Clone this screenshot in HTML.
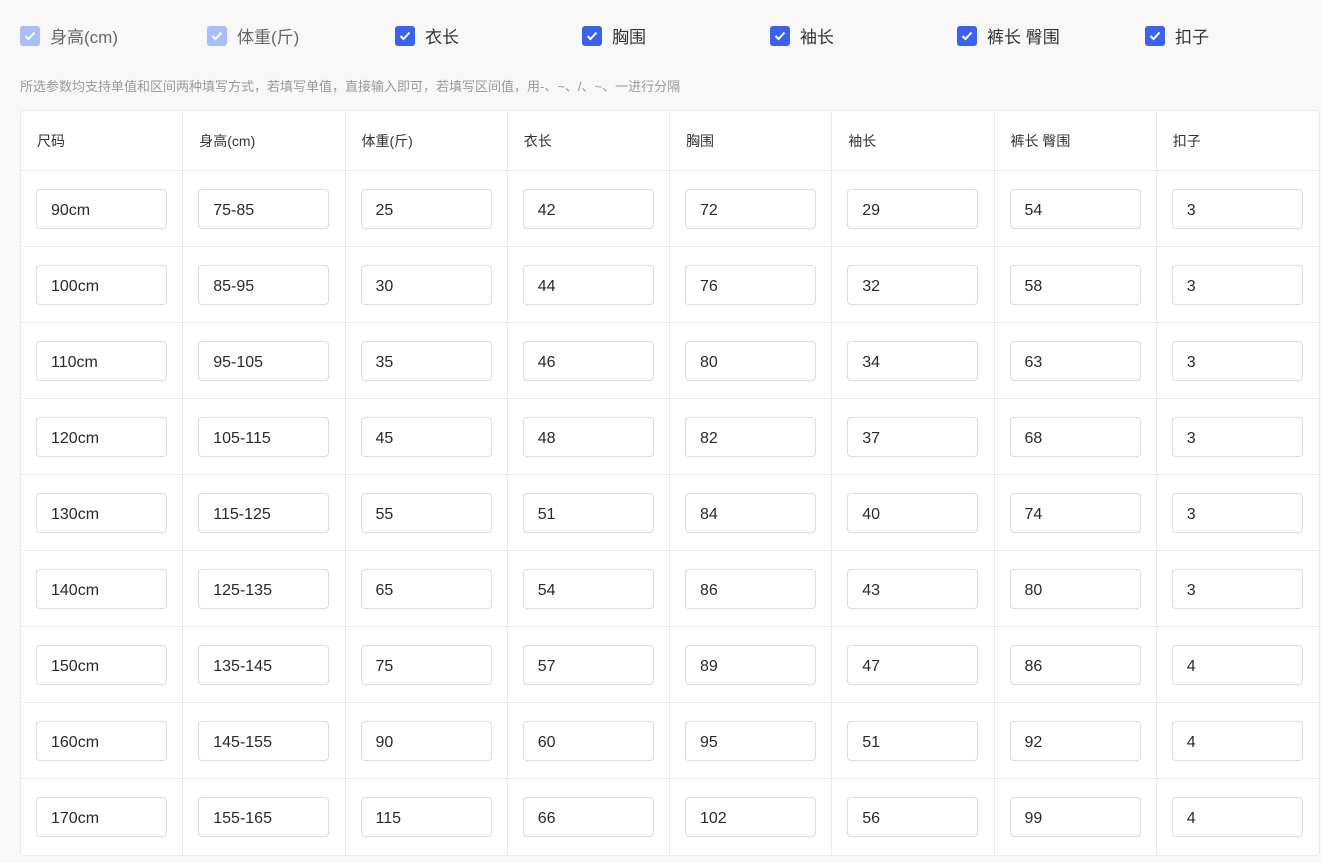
<!DOCTYPE html>
<html><head><meta charset="utf-8"><style>
*{box-sizing:border-box;margin:0;padding:0}
body{width:1321px;height:863px;background:#f8f8f8;font-family:"Liberation Sans","Noto Sans CJK SC",sans-serif;color:#333;position:relative;overflow:hidden}
.cb{position:absolute;top:23px;display:flex;align-items:center;font-size:17px;color:#333}
.cb i{width:20px;height:20px;border-radius:3px;background:#3a62f0;margin-right:10px;display:flex;align-items:center;justify-content:center}
.cb.dis i{background:#a9bdf8}
.cb.dis{color:#666}
.tip{position:absolute;left:20px;top:76px;font-size:13px;color:#999}
.tbl{position:absolute;left:20px;top:110px;width:1300px;height:746px;background:#fff;border:1px solid #ebebeb;border-radius:4px;display:grid;grid-template-columns:repeat(8,1fr);grid-template-rows:60px repeat(9,1fr)}
.c{border-right:1px solid #ebebeb;border-bottom:1px solid #ebebeb;display:flex;align-items:center;padding-left:15px}
.c:nth-child(8n){border-right:none}
.c:nth-last-child(-n+8){border-bottom:none}
.h{font-size:14px;color:#333;padding-left:16px}
.c span{display:block;width:131px;height:40px;border:1px solid #dcdcdc;border-radius:4px;font-size:16px;line-height:42px;padding-left:14px;color:#2a2a2a}
</style></head><body>
<div class="cb dis" style="left:20px"><i><svg width="12" height="10" viewBox="0 0 12 10"><path d="M1.5 5l3 3 6-6.5" stroke="#fff" stroke-width="2" fill="none"/></svg></i>身高(cm)</div>
<div class="cb dis" style="left:207px"><i><svg width="12" height="10" viewBox="0 0 12 10"><path d="M1.5 5l3 3 6-6.5" stroke="#fff" stroke-width="2" fill="none"/></svg></i>体重(斤)</div>
<div class="cb" style="left:395px"><i><svg width="12" height="10" viewBox="0 0 12 10"><path d="M1.5 5l3 3 6-6.5" stroke="#fff" stroke-width="2" fill="none"/></svg></i>衣长</div>
<div class="cb" style="left:582px"><i><svg width="12" height="10" viewBox="0 0 12 10"><path d="M1.5 5l3 3 6-6.5" stroke="#fff" stroke-width="2" fill="none"/></svg></i>胸围</div>
<div class="cb" style="left:770px"><i><svg width="12" height="10" viewBox="0 0 12 10"><path d="M1.5 5l3 3 6-6.5" stroke="#fff" stroke-width="2" fill="none"/></svg></i>袖长</div>
<div class="cb" style="left:957px"><i><svg width="12" height="10" viewBox="0 0 12 10"><path d="M1.5 5l3 3 6-6.5" stroke="#fff" stroke-width="2" fill="none"/></svg></i>裤长 臀围</div>
<div class="cb" style="left:1145px"><i><svg width="12" height="10" viewBox="0 0 12 10"><path d="M1.5 5l3 3 6-6.5" stroke="#fff" stroke-width="2" fill="none"/></svg></i>扣子</div>
<div class="tip">所选参数均支持单值和区间两种填写方式，若填写单值，直接输入即可，若填写区间值，用-、~、/、~、一进行分隔</div>
<div class="tbl">
<div class="c h">尺码</div><div class="c h">身高(cm)</div><div class="c h">体重(斤)</div><div class="c h">衣长</div><div class="c h">胸围</div><div class="c h">袖长</div><div class="c h">裤长 臀围</div><div class="c h">扣子</div>
<div class="c"><span>90cm</span></div><div class="c"><span>75-85</span></div><div class="c"><span>25</span></div><div class="c"><span>42</span></div><div class="c"><span>72</span></div><div class="c"><span>29</span></div><div class="c"><span>54</span></div><div class="c"><span>3</span></div>
<div class="c"><span>100cm</span></div><div class="c"><span>85-95</span></div><div class="c"><span>30</span></div><div class="c"><span>44</span></div><div class="c"><span>76</span></div><div class="c"><span>32</span></div><div class="c"><span>58</span></div><div class="c"><span>3</span></div>
<div class="c"><span>110cm</span></div><div class="c"><span>95-105</span></div><div class="c"><span>35</span></div><div class="c"><span>46</span></div><div class="c"><span>80</span></div><div class="c"><span>34</span></div><div class="c"><span>63</span></div><div class="c"><span>3</span></div>
<div class="c"><span>120cm</span></div><div class="c"><span>105-115</span></div><div class="c"><span>45</span></div><div class="c"><span>48</span></div><div class="c"><span>82</span></div><div class="c"><span>37</span></div><div class="c"><span>68</span></div><div class="c"><span>3</span></div>
<div class="c"><span>130cm</span></div><div class="c"><span>115-125</span></div><div class="c"><span>55</span></div><div class="c"><span>51</span></div><div class="c"><span>84</span></div><div class="c"><span>40</span></div><div class="c"><span>74</span></div><div class="c"><span>3</span></div>
<div class="c"><span>140cm</span></div><div class="c"><span>125-135</span></div><div class="c"><span>65</span></div><div class="c"><span>54</span></div><div class="c"><span>86</span></div><div class="c"><span>43</span></div><div class="c"><span>80</span></div><div class="c"><span>3</span></div>
<div class="c"><span>150cm</span></div><div class="c"><span>135-145</span></div><div class="c"><span>75</span></div><div class="c"><span>57</span></div><div class="c"><span>89</span></div><div class="c"><span>47</span></div><div class="c"><span>86</span></div><div class="c"><span>4</span></div>
<div class="c"><span>160cm</span></div><div class="c"><span>145-155</span></div><div class="c"><span>90</span></div><div class="c"><span>60</span></div><div class="c"><span>95</span></div><div class="c"><span>51</span></div><div class="c"><span>92</span></div><div class="c"><span>4</span></div>
<div class="c"><span>170cm</span></div><div class="c"><span>155-165</span></div><div class="c"><span>115</span></div><div class="c"><span>66</span></div><div class="c"><span>102</span></div><div class="c"><span>56</span></div><div class="c"><span>99</span></div><div class="c"><span>4</span></div>
</div>
</body></html>
